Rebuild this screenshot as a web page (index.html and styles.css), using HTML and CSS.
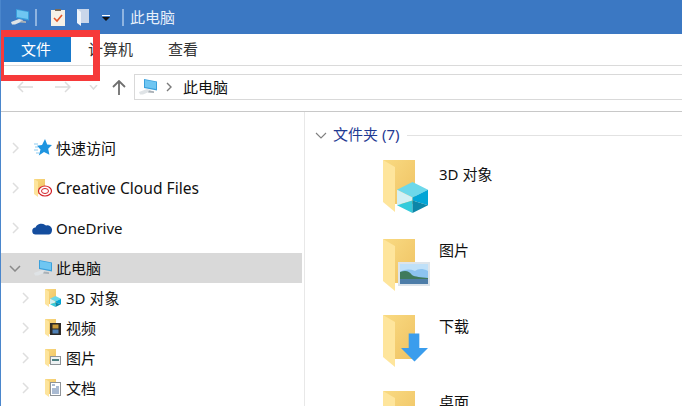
FILE: index.html
```html
<!DOCTYPE html>
<html lang="zh-CN">
  <head>
    <meta charset="utf-8">
    <title>此电脑</title>
    <link rel="stylesheet" href="styles.css">
  </head>
  <body>
    <svg class="defs" width="0" height="0">
      <defs>
        <linearGradient id="back" x1="0" y1="0" x2="1" y2="1">
          <stop offset="0" stop-color="#f9da82"/>
          <stop offset="1" stop-color="#efc262"/>
        </linearGradient>
        <symbol id="pc" viewBox="0 0 20 18">
          <path d="M6 1l13 2.500v9L6 10z" fill="#3aa0dc"/>
          <path d="M7 2l11 2v7L7 9z" fill="#6fc6f2"/>
          <path d="M1 14l8-3 4 1-1 1.500-7 3H2z" fill="#dfe3e6"/>
          <path d="M11 12.500l5 .8v1.700l-6-.6z" fill="#a9b0b6"/>
        </symbol>
        <symbol id="small-folder" viewBox="0 0 12 18">
          <path d="M0 0h11v15H0z" fill="url(#back)"/>
          <path d="M0 0l4 2.500V18L0 15z" fill="#fde49c"/>
        </symbol>
        <symbol id="big-folder" viewBox="0 0 32 52">
          <path d="M0 0h32v44H12z" fill="url(#back)"/>
          <path d="M0 0l12 7v45L0 42z" fill="#fee59c"/>
        </symbol>
        <symbol id="cube" viewBox="0 0 32 32">
          <path d="M16 0l16 8-16 8L0 8z" fill="#6cd8ea"/>
          <path d="M0 8l16 8v3L0 24z" fill="#d3f0f4"/>
          <path d="M32 8L16 16v3l16 5z" fill="#02a5d6"/>
          <path d="M0 24l16-5v13z" fill="#34cbdc"/>
          <path d="M32 24l-16-5v13z" fill="#0c86a8"/>
        </symbol>
        <symbol id="picture" viewBox="0 0 32 24">
          <path d="M0 0h32v24H0z" fill="#dde4ea"/>
          <path d="M2 2h28v20H2z" fill="#8cc3f0"/>
          <path d="M2 2h28v7c-6-3-10-2-13 0-5-2-10-2-15 1z" fill="#bfe0f8"/>
          <path d="M2 10c6-2 9-1 12 3 3 2 9 2 16 3v1H2z" fill="#3f7a5c"/>
          <path d="M2 17h28v5H2z" fill="#4d7da8"/>
        </symbol>
        <symbol id="arrow-down" viewBox="0 0 28 29">
          <path d="M8 0h11v15h9L14 29 0 15h8z" fill="#3a9ded"/>
        </symbol>
      </defs>
    </svg>

    <div class="window">
      <header class="titlebar">
        <svg class="qa-pc"><use href="#pc"/></svg>
        <span class="qa-sep"></span>
        <svg class="qa-check" viewBox="0 0 14 17">
          <path d="M0 1h14v16H0z" fill="#f6f1e6"/>
          <path d="M4 0h6v2H4z" fill="#7b6a55"/>
          <path d="M3 9l3 3 5-6" fill="none" stroke="#e2562a" stroke-width="1.600"/>
        </svg>
        <svg class="qa-folder" viewBox="0 0 12 17">
          <path d="M0 0h12v14H0z" fill="#c9d6ea"/>
          <path d="M0 0l4 3v14l-4-3z" fill="#eef3fa"/>
        </svg>
        <svg class="qa-drop" viewBox="0 0 8 6">
          <path d="M0 0h8v1H0z" fill="#fff"/>
          <path d="M0 2h8L4 6z" fill="#111"/>
        </svg>
        <span class="qa-sep"></span>
        <span class="title">此电脑</span>
      </header>

      <nav class="ribbon">
        <span class="tab tab-file">文件</span>
        <span class="tab tab-computer">计算机</span>
        <span class="tab tab-view">查看</span>
      </nav>

      <div class="addressrow">
        <svg class="nav-btn back" viewBox="0 0 16 12">
          <path d="M6 1L1 6l5 5M1 6h15" fill="none" stroke="#dcdcdc" stroke-width="1.500"/>
        </svg>
        <svg class="nav-btn forward" viewBox="0 0 16 12">
          <path d="M10 1l5 5-5 5M15 6H0" fill="none" stroke="#dcdcdc" stroke-width="1.500"/>
        </svg>
        <svg class="nav-btn recent" viewBox="0 0 9 5">
          <path d="M1 0l3.500 4L8 0" fill="none" stroke="#dcdcdc" stroke-width="1.500"/>
        </svg>
        <svg class="nav-btn up" viewBox="0 0 14 15">
          <path d="M1 7l6-6 6 6M7 1v14" fill="none" stroke="#6f6f6f" stroke-width="1.800"/>
        </svg>
        <div class="addressbox">
          <svg class="addr-pc"><use href="#pc"/></svg>
          <svg class="addr-chev" viewBox="0 0 6 10">
            <path d="M1 1l4 4-4 4" fill="none" stroke="#7a7a7a" stroke-width="1.400"/>
          </svg>
          <span>此电脑</span>
        </div>
      </div>

      <main class="panes">
        <aside class="navpane">
          <div class="nav-row top">
            <svg class="chev" viewBox="0 0 7 12"><path d="M1 1l5 5-5 5" fill="none" stroke="#dedede" stroke-width="1.500"/></svg>
            <svg class="nav-icon" viewBox="0 0 18 18">
              <path d="M11 0l2.200 5.500 4.800.5-3.800 3.700 1.200 6L10 13 4.800 16.500l1.700-6L3 6.800l5-.8z" fill="#1f95e0"/>
              <path d="M0 5h4M1 8h3M0 11h4M2 14h3" stroke="#8ccbf0" stroke-width="1"/>
            </svg>
            <span>快速访问</span>
          </div>
          <div class="nav-row top">
            <svg class="chev" viewBox="0 0 7 12"><path d="M1 1l5 5-5 5" fill="none" stroke="#dedede" stroke-width="1.500"/></svg>
            <svg class="nav-icon" viewBox="0 0 18 18">
              <use href="#small-folder" width="12" height="18"/>
              <ellipse cx="11" cy="12" rx="6.500" ry="5" fill="#fff" stroke="#d3232a" stroke-width="1.200"/>
              <ellipse cx="11" cy="12" rx="3.500" ry="2.500" fill="none" stroke="#d3232a"/>
            </svg>
            <span class="latin">Creative Cloud Files</span>
          </div>
          <div class="nav-row top">
            <svg class="chev" viewBox="0 0 7 12"><path d="M1 1l5 5-5 5" fill="none" stroke="#dedede" stroke-width="1.500"/></svg>
            <svg class="nav-icon cloud" viewBox="0 0 20 14">
              <path d="M4 13.500a3.500 3.500 0 0 1-.5-7A6.500 6.500 0 0 1 14 4.500 4.500 4.500 0 0 1 20 9c0 2-1 4.500-3 4.500z" fill="#144d9e"/>
            </svg>
            <span class="latin">OneDrive</span>
          </div>
          <div class="nav-row top selected">
            <svg class="chev open" viewBox="0 0 12 7"><path d="M1 1l5 5 5-5" fill="none" stroke="#8a8a8a" stroke-width="1.500"/></svg>
            <svg class="nav-icon pc"><use href="#pc"/></svg>
            <span>此电脑</span>
          </div>
          <div class="nav-row sub">
            <svg class="chev" viewBox="0 0 7 12"><path d="M1 1l5 5-5 5" fill="none" stroke="#dedede" stroke-width="1.500"/></svg>
            <svg class="nav-icon" viewBox="0 0 16 18">
              <use href="#small-folder" width="12" height="18"/>
              <use href="#cube" x="5" y="7" width="11" height="11"/>
            </svg>
            <span>3D 对象</span>
          </div>
          <div class="nav-row sub">
            <svg class="chev" viewBox="0 0 7 12"><path d="M1 1l5 5-5 5" fill="none" stroke="#dedede" stroke-width="1.500"/></svg>
            <svg class="nav-icon" viewBox="0 0 16 18">
              <use href="#small-folder" width="12" height="18"/>
              <path d="M5 4h11v12H5z" fill="#2d2a28"/>
              <path d="M7.500 5.500h6v4h-6z" fill="#c99a3a"/>
              <path d="M7.500 10.500h6v4h-6z" fill="#4f80b5"/>
            </svg>
            <span>视频</span>
          </div>
          <div class="nav-row sub">
            <svg class="chev" viewBox="0 0 7 12"><path d="M1 1l5 5-5 5" fill="none" stroke="#dedede" stroke-width="1.500"/></svg>
            <svg class="nav-icon" viewBox="0 0 16 18">
              <use href="#small-folder" width="12" height="18"/>
              <path d="M5 7h11v9H5z" fill="#8f9498"/>
              <path d="M6 8h9v7H6z" fill="#eef2f4"/>
              <path d="M7 10h7v2H7z" fill="#4c7f80"/>
            </svg>
            <span>图片</span>
          </div>
          <div class="nav-row sub">
            <svg class="chev" viewBox="0 0 7 12"><path d="M1 1l5 5-5 5" fill="none" stroke="#dedede" stroke-width="1.500"/></svg>
            <svg class="nav-icon" viewBox="0 0 16 18">
              <use href="#small-folder" width="12" height="18"/>
              <path d="M5 3h11v14H5z" fill="#8f9498"/>
              <path d="M6 4h9v12H6z" fill="#fff"/>
              <path d="M7 6h3M11 8h3M7 10h7M7 12h7M7 14h7" stroke="#5577a5"/>
            </svg>
            <span>文档</span>
          </div>
        </aside>

        <section class="content">
          <div class="group-head">
            <svg class="group-chev" viewBox="0 0 12 7"><path d="M1 1l5 5 5-5" fill="none" stroke="#7f7f7f" stroke-width="1.100"/></svg>
            <span>文件夹 (7)</span>
            <span class="group-line"></span>
          </div>
          <div class="folder-row">
            <svg class="folder raised" viewBox="0 0 48 54">
              <use href="#big-folder" width="32" height="52"/>
              <use href="#cube" x="14" y="22" width="31" height="31"/>
            </svg>
            <span>3D 对象</span>
          </div>
          <div class="folder-row">
            <svg class="folder" viewBox="0 0 48 54">
              <use href="#big-folder" width="32" height="52"/>
              <use href="#picture" x="15" y="23" width="32" height="24"/>
            </svg>
            <span>图片</span>
          </div>
          <div class="folder-row">
            <svg class="folder" viewBox="0 0 48 54">
              <use href="#big-folder" width="32" height="52"/>
              <use href="#arrow-down" x="18" y="18" width="27" height="29"/>
            </svg>
            <span>下载</span>
          </div>
          <div class="folder-row">
            <svg class="folder" viewBox="0 0 48 54">
              <use href="#big-folder" width="32" height="52"/>
            </svg>
            <span>桌面</span>
          </div>
        </section>
      </main>

      <div class="callout"></div>
    </div>
  </body>
</html>
```

FILE: styles.css
```css
html, body {
  margin: 0;
  height: 100%;
  overflow: hidden;
  background: #fff;
}
.defs {
  position: absolute;
}
.window {
  position: relative;
  width: 682px;
  height: 406px;
  overflow: hidden;
  border-left: 1px solid #4a86cc;
  box-sizing: border-box;
  font-family: "Noto Sans", "Noto Sans CJK SC", sans-serif;
  font-size: 15px;
  color: #111;
}

/* title bar */
.titlebar {
  height: 34px;
  margin-left: -1px;
  background: #3b78c3;
  display: flex;
  align-items: center;
  color: #e6effa;
}
.qa-pc {
  width: 20px;
  height: 18px;
  margin-left: 10px;
}
.qa-sep {
  width: 2px;
  height: 17px;
  margin-left: 5px;
  background: #8fb4e0;
}
.qa-check {
  width: 14px;
  height: 17px;
  margin-left: 14px;
}
.qa-folder {
  width: 12px;
  height: 17px;
  margin-left: 12px;
}
.qa-drop {
  width: 8px;
  height: 6px;
  margin-left: 13px;
  margin-top: 2px;
}
.qa-drop + .qa-sep {
  margin-left: 12px;
}
.title {
  margin-left: 6px;
  padding-bottom: 1px;
}

/* ribbon */
.ribbon {
  height: 32px;
  border-bottom: 1px solid #dadada;
  box-sizing: border-box;
  display: flex;
  align-items: flex-start;
  padding: 3px 0 0 3px;
  color: #333;
}
.tab {
  height: 25px;
  line-height: 24px;
  text-align: center;
}
.tab-file {
  width: 67px;
  padding-right: 3px;
  box-sizing: border-box;
  background: #1979ca;
  color: #fff;
}
.tab-computer {
  margin-left: 17px;
}
.tab-view {
  margin-left: 35px;
}

/* address row */
.addressrow {
  height: 46px;
  border-bottom: 1px solid #c8c8c8;
  box-sizing: border-box;
  display: flex;
  align-items: flex-start;
  padding-top: 8px;
}
.nav-btn {
  flex: none;
  margin-top: 7px;
}
.back {
  width: 16px;
  height: 12px;
  margin-left: 16px;
}
.forward {
  width: 16px;
  height: 12px;
  margin-left: 22px;
}
.recent {
  width: 9px;
  height: 5px;
  margin: 11px 0 0 18px;
}
.up {
  width: 14px;
  height: 15px;
  margin: 6px 0 0 14px;
}
.addressbox {
  flex: 1;
  height: 26px;
  margin-left: 8px;
  border: 1px solid #d9d9d9;
  border-right: none;
  box-sizing: border-box;
  display: flex;
  align-items: center;
  font-size: 15px;
}
.addr-pc {
  width: 20px;
  height: 18px;
  margin-left: 3px;
}
.addr-chev {
  width: 6px;
  height: 10px;
  margin-left: 8px;
}
.addressbox span {
  margin-left: 11px;
  padding-bottom: 2px;
}

/* panes */
.panes {
  display: flex;
  height: 294px;
}
.navpane {
  width: 303px;
  flex: none;
  padding-top: 16px;
  border-right: 1px solid #e8e8e8;
}
.nav-row {
  display: flex;
  align-items: center;
  white-space: nowrap;
}
.nav-row.top {
  height: 40px;
}
.nav-row.top.selected {
  height: 30px;
  margin: 5px 2px 0 0;
  background: #d9d9d9;
}
.nav-row.sub {
  height: 30px;
  padding-left: 10px;
}
.chev {
  width: 7px;
  height: 12px;
  margin-left: 11px;
  flex: none;
}
.chev.open {
  width: 12px;
  height: 7px;
  margin-left: 8px;
}
.nav-icon {
  width: 18px;
  height: 18px;
  margin-left: 15px;
  flex: none;
}
.nav-icon.pc {
  width: 20px;
  margin-left: 12px;
}
.nav-icon.cloud {
  width: 20px;
  margin-left: 13px;
}
.nav-row span {
  margin-left: 4px;
  padding-bottom: 2px;
}
.nav-icon.pc + span {
  margin-left: 3px;
}
.nav-row span.latin {
  padding-bottom: 0;
}
.nav-icon + span.latin {
  font-size: 15.6px;
}
.nav-icon.cloud + span.latin {
  font-size: 15px;
}

/* content */
.content {
  flex: 1;
  min-width: 0;
}
.group-head {
  height: 22px;
  margin-top: 12px;
  display: flex;
  align-items: center;
  color: #1f3a93;
}
.group-chev {
  width: 12px;
  height: 7px;
  margin-left: 10px;
  flex: none;
}
.group-head span:first-of-type {
  margin-left: 6px;
  padding-bottom: 3px;
  white-space: nowrap;
}
.group-line {
  flex: 1;
  height: 1px;
  margin-left: 8px;
  background: #e2e2e2;
}
.folder-row {
  height: 76px;
  display: flex;
  align-items: flex-start;
  padding-left: 78px;
  box-sizing: border-box;
}
.group-head + .folder-row {
  margin-top: 17px;
}
.folder {
  width: 48px;
  height: 54px;
  flex: none;
}
.folder.raised {
  margin-top: -3px;
  margin-bottom: 3px;
}
.folder-row span {
  margin-left: 8px;
  margin-top: -1px;
  line-height: 24px;
}

/* red callout drawn over the screenshot */
.callout {
  position: absolute;
  left: -1px;
  top: 30px;
  width: 100px;
  height: 51px;
  box-sizing: border-box;
  border: solid #f63a3a;
  border-width: 7px 7px 6px 4px;
}
```
